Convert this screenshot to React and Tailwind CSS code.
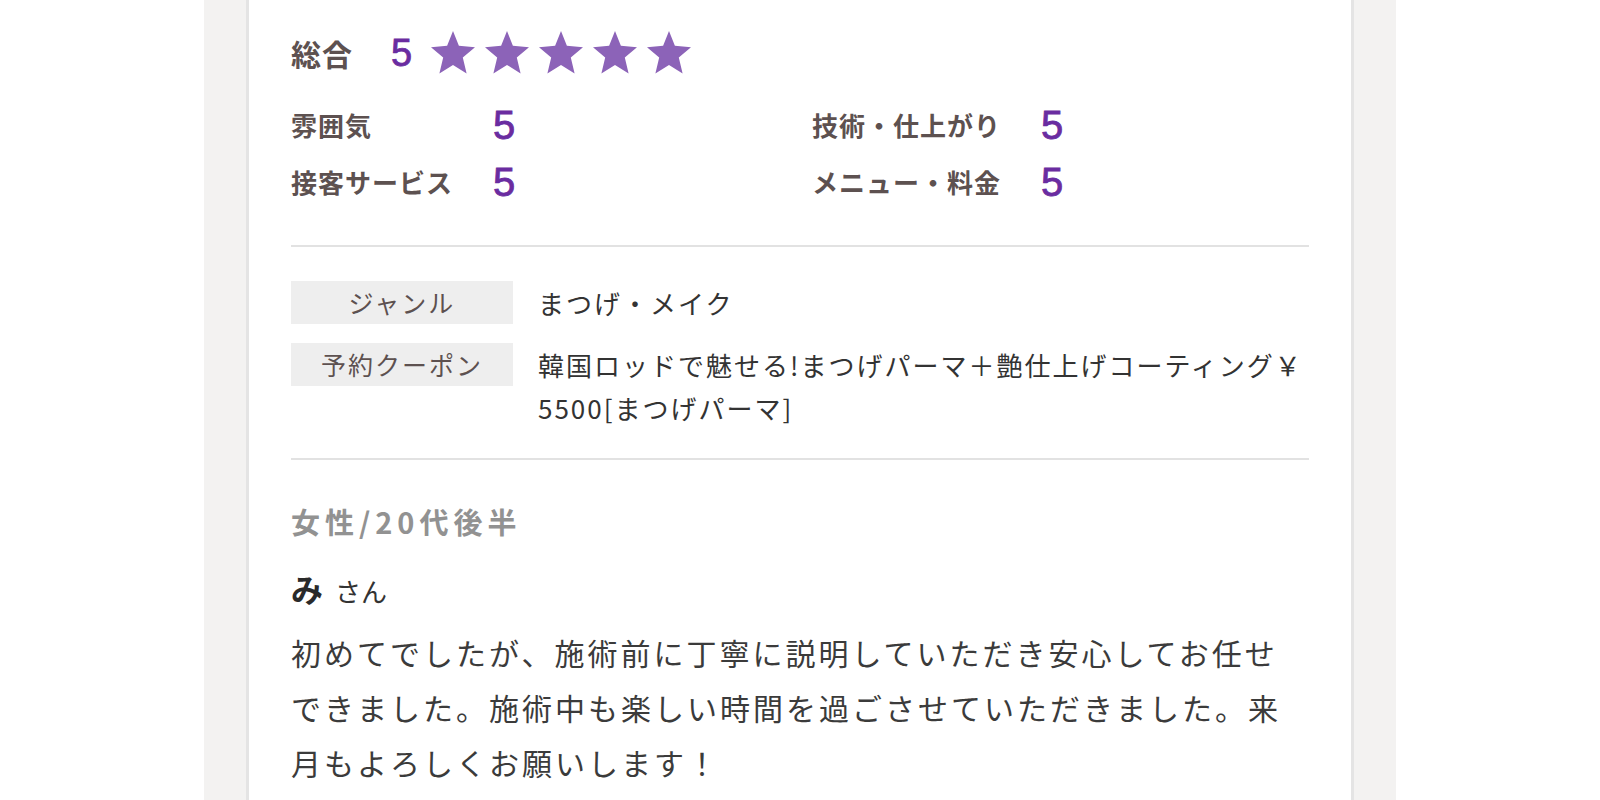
const JP = { fontFamily: '"Noto Sans CJK JP", "Noto Sans", sans-serif' };
const NUM = { fontFamily: '"Liberation Sans", Arial, sans-serif' };

function Star() {
  return (
    <svg viewBox="0 0 24 24" className="w-[48px] h-[48px] shrink-0" fill="#8c63b8">
      <polygon points="12,1 14.94,8.4 23,9.1 16.9,14.3 18.8,22.2 12,18 5.2,22.2 7.1,14.3 1,9.1 9.06,8.4" />
    </svg>
  );
}

function Score({ label, labelW }) {
  return (
    <div className="flex items-center h-[50px]">
      <div className={`${labelW} shrink-0 text-[26px] font-bold tracking-[1px] text-[#5d5150] leading-[50px]`}>{label}</div>
      <div className="text-[40px] text-[#6a2ca0] leading-[50px] [-webkit-text-stroke:0.8px_#6a2ca0]" style={NUM}>5</div>
    </div>
  );
}

export default function App() {
  return (
    <div className="w-full h-[800px] bg-white flex justify-center overflow-hidden" style={JP}>
      <div className="w-[1192px] h-full bg-[#f3f2f1] px-[42px]">
        <div className="h-full bg-white border-x-[3px] border-[#e4e4e4] px-[42px] pt-[23px]">
          {/* total */}
          <div className="flex items-center h-[60px]">
            <div className="text-[30px] font-bold tracking-[1px] text-[#5d5150]">総合</div>
            <div className="ml-[38px] text-[38px] text-[#6a2ca0] leading-none [-webkit-text-stroke:0.8px_#6a2ca0]" style={NUM}>5</div>
            <div className="ml-[17px] flex gap-[6px]">
              <Star /><Star /><Star /><Star /><Star />
            </div>
          </div>

          {/* sub scores */}
          <div className="mt-[17px] grid grid-cols-[521px_1fr] gap-y-[7px]">
            <Score label="雰囲気" labelW="w-[202px]" />
            <Score label="技術・仕上がり" labelW="w-[229px]" />
            <Score label="接客サービス" labelW="w-[202px]" />
            <Score label="メニュー・料金" labelW="w-[229px]" />
          </div>

          <div className="mt-[38px] h-[2px] bg-[#e2e2e2]" />

          {/* table */}
          <div className="mt-[34px] flex gap-[25px]">
            <div className="w-[222px] h-[43px] shrink-0 bg-[#eeeeee] flex items-center justify-center text-[25px] tracking-[2px] text-[#5d5150]">ジャンル</div>
            <div className="text-[26px] leading-[43px] tracking-[2px] text-[#333333]">まつげ・メイク</div>
          </div>
          <div className="mt-[19px] flex gap-[25px]">
            <div className="w-[222px] h-[43px] shrink-0 bg-[#eeeeee] flex items-center justify-center text-[25px] tracking-[2px] text-[#5d5150]">予約クーポン</div>
            <div className="text-[26px] leading-[43px] tracking-[2px] text-[#333333] whitespace-nowrap">
              韓国ロッドで魅せる!まつげパーマ＋艶仕上げコーティング￥<br />5500[まつげパーマ]
            </div>
          </div>

          <div className="mt-[29px] h-[2px] bg-[#e2e2e2]" />

          {/* reviewer */}
          <div className="mt-[41px] text-[29px] leading-[40px] font-bold tracking-[5px] text-[#929292]">女性/20代後半</div>
          <div className="mt-[27px] flex items-baseline leading-[40px]">
            <span className="text-[32px] font-bold text-[#2a2a2a]">み</span>
            <span className="ml-[12px] text-[26px] text-[#333333]">さん</span>
          </div>
          <div className="mt-[14px] text-[30px] leading-[55px] tracking-[3px] text-[#3b3b3b] whitespace-nowrap">
            初めてでしたが、施術前に丁寧に説明していただき安心してお任せ<br />
            できました。施術中も楽しい時間を過ごさせていただきました。来<br />
            月もよろしくお願いします！
          </div>
        </div>
      </div>
    </div>
  );
}
